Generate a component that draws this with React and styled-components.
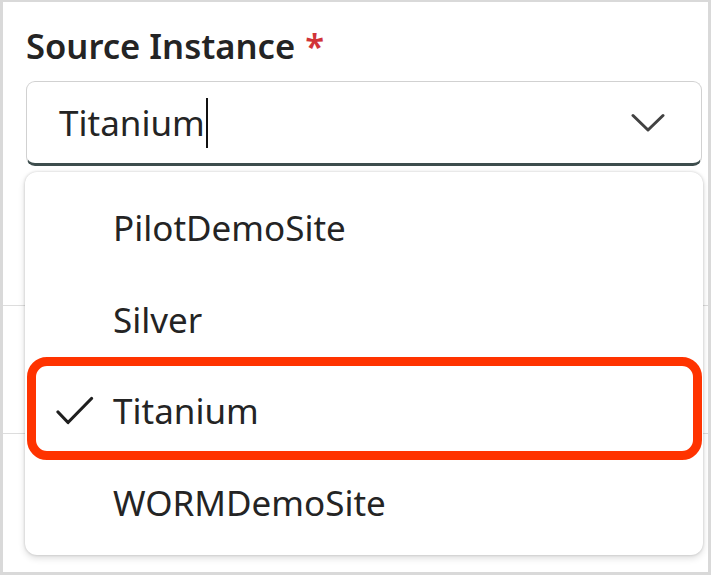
import React from "react";
import styled, { createGlobalStyle } from "styled-components";

const GlobalStyle = createGlobalStyle`
  html, body {
    margin: 0;
    padding: 0;
    background: #ffffff;
  }
  * {
    box-sizing: border-box;
  }
`;

const Frame = styled.div`
  position: relative;
  width: 711px;
  height: 575px;
  border: 3px solid #d9d9d9;
  border-top-width: 2px;
  background: #ffffff;
  font-family: "Noto Sans", "Open Sans", sans-serif;
  color: #242424;
  overflow: hidden;
`;

const Field = styled.div`
  display: flex;
  flex-direction: column;
  padding: 21px 6px 0 23px;
`;

const Label = styled.label`
  font-size: 34.6px;
  font-weight: 600;
  line-height: 46px;
  color: #242424;
`;

const Required = styled.span`
  color: #d13438;
  margin-left: 10px;
`;

const Combo = styled.div`
  margin-top: 12px;
  height: 85px;
  display: flex;
  align-items: center;
  padding: 0 36px 0 32px;
  border: 1.5px solid #d1d1d1;
  border-bottom: 3px solid #3d4d4d;
  border-radius: 9px;
  background: #ffffff;
`;

const Value = styled.span`
  flex: 1;
  display: flex;
  align-items: center;
  font-size: 35px;
  line-height: 46px;
`;

const Caret = styled.span`
  display: inline-block;
  width: 2px;
  height: 50px;
  margin-left: 1px;
  background: #111111;
`;

const Section = styled.div`
  height: ${({ $h }) => $h}px;
  border-bottom: 1.5px solid #dddddd;
`;

const Listbox = styled.ul`
  position: absolute;
  top: 170px;
  left: 22px;
  width: 678px;
  height: 383px;
  margin: 0;
  padding: 10px 0 0;
  list-style: none;
  background: #ffffff;
  border-radius: 12px;
  box-shadow: 0 0 3px rgba(0, 0, 0, 0.18), 0 3px 7px rgba(0, 0, 0, 0.14);
`;

const Option = styled.li`
  position: relative;
  height: 91.5px;
  display: flex;
  align-items: center;
  padding-left: 27px;
  gap: 15px;
  font-size: 35px;
  color: #242424;
`;

const Check = styled.span`
  width: 46px;
  display: flex;
  align-items: center;
  justify-content: center;
`;

const Highlight = styled.span`
  position: absolute;
  left: 2px;
  right: 1px;
  top: -8px;
  bottom: -3px;
  border: 9px solid #ff3300;
  border-radius: 20px;
  pointer-events: none;
`;

const ChevronDown = () => (
  <svg width="34" height="20" viewBox="0 0 34 20" fill="none">
    <path d="M2 2.5 L17 17 L32 2.5" stroke="#424242" strokeWidth="3" strokeLinecap="round" strokeLinejoin="round" />
  </svg>
);

const CheckMark = () => (
  <svg width="38" height="30" viewBox="0 0 38 30" fill="none">
    <path d="M2 16 L12 26.5 L35.5 2.5" stroke="#1f1f1f" strokeWidth="3.2" strokeLinecap="round" strokeLinejoin="round" />
  </svg>
);

const options = ["PilotDemoSite", "Silver", "Titanium", "WORMDemoSite"];
const selected = "Titanium";

export default function App() {
  return (
    <>
      <GlobalStyle />
      <Frame>
        <Field>
          <Label>
            Source Instance<Required>*</Required>
          </Label>
          <Combo>
            <Value>
              {selected}
              <Caret />
            </Value>
            <ChevronDown />
          </Combo>
        </Field>
        <Section $h={140} />
        <Section $h={128} />
        <Listbox>
          {options.map((o) => (
            <Option key={o}>
              <Check>{o === selected && <CheckMark />}</Check>
              {o}
              {o === selected && <Highlight />}
            </Option>
          ))}
        </Listbox>
      </Frame>
    </>
  );
}
